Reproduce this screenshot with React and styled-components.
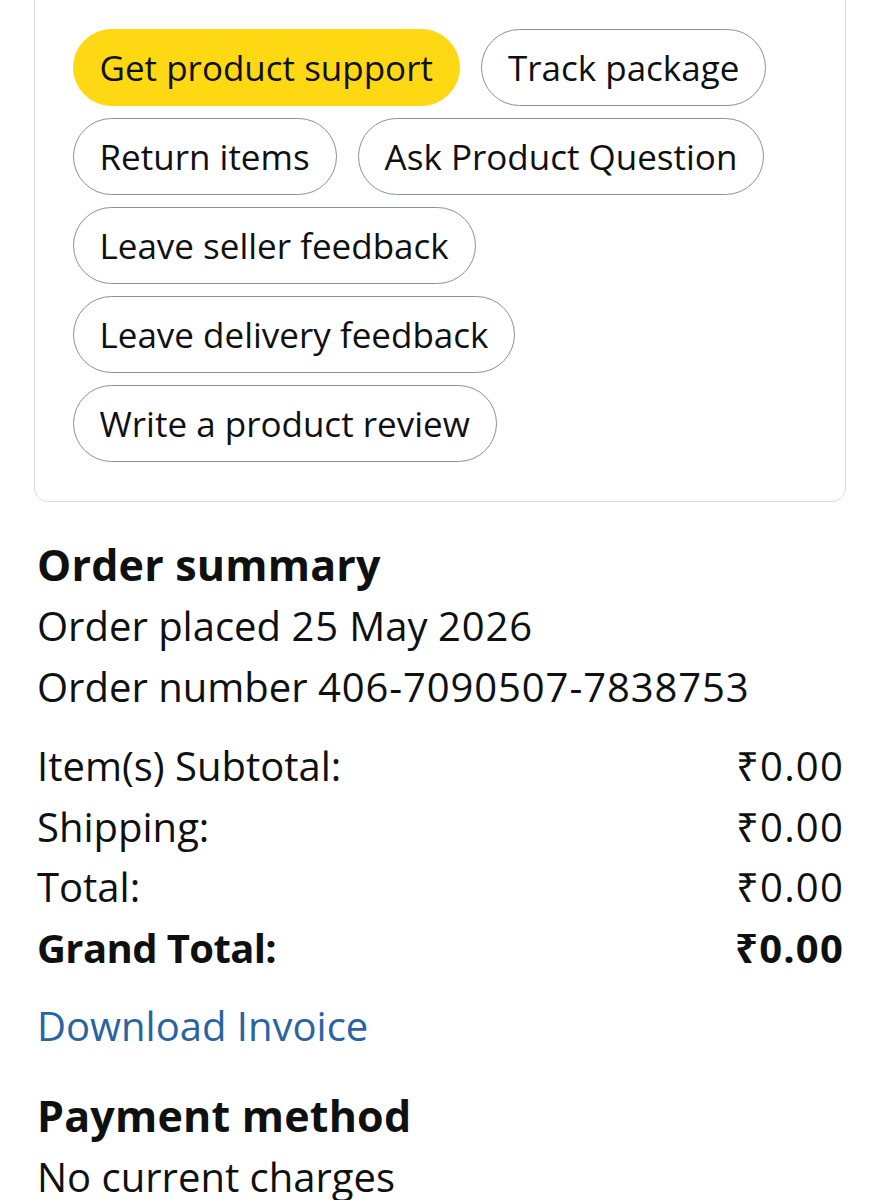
import React from "react";
import styled, { createGlobalStyle } from "styled-components";

const Global = createGlobalStyle`
  html, body { margin: 0; padding: 0; background: #ffffff; }
  body {
    font-family: "Open Sans", "Noto Sans", "DejaVu Sans", sans-serif;
    color: #0f1111;
    overflow: hidden;
  }
`;

const Page = styled.div`
  width: 880px;
  display: flex;
  flex-direction: column;
`;

const Card = styled.section`
  margin: -40px 34px 0 34px;
  padding: 67.5px 37.5px 39.5px 37.5px;
  border: 1.5px solid #d9dcdc;
  border-radius: 14px;
  display: flex;
  flex-direction: column;
  gap: 12px;
`;

const PillRow = styled.div`
  display: flex;
  gap: 21px;
`;

const Pill = styled.button`
  height: 77px;
  padding: 0 26px;
  border-radius: 40px;
  border: 1.5px solid ${(p) => (p.$primary ? "#ffd814" : "#8d9096")};
  background: ${(p) => (p.$primary ? "#ffd814" : "#ffffff")};
  color: #0f1111;
  font-family: inherit;
  font-size: 35px;
  font-weight: 400;
  display: inline-flex;
  align-items: center;
  white-space: nowrap;
  cursor: pointer;
`;

const Content = styled.div`
  padding: 32px 37px 0 37px;
  display: flex;
  flex-direction: column;
`;

const Heading = styled.h2`
  margin: 0;
  font-size: 43px;
  letter-spacing: 0.2px;
  font-weight: 700;
  line-height: 61px;
`;

const Line = styled.div`
  font-size: 40px;
  line-height: 61px;
`;

const Num = styled.span`
  letter-spacing: 0.9px;
`;

const Totals = styled.div`
  margin-top: 19px;
  display: flex;
  flex-direction: column;
`;

const Row = styled.div`
  display: flex;
  justify-content: space-between;
  font-size: 40px;
  line-height: 60.7px;
  font-weight: ${(p) => (p.$bold ? 700 : 400)};
`;

const Label = styled.span`
  letter-spacing: ${(p) => (p.$bold ? "-0.6px" : "0")};
`;

const Amount = styled.span`
  letter-spacing: 1.2px;
  margin-right: -1px;
`;

const Link = styled.a`
  margin-top: 17px;
  font-size: 40px;
  line-height: 60px;
  color: #2a64a0;
  text-decoration: none;
  align-self: flex-start;
`;

const Section = styled.div`
  margin-top: 29px;
  display: flex;
  flex-direction: column;
`;

const rows = [
  [{ label: "Get product support", primary: true }, { label: "Track package" }],
  [{ label: "Return items" }, { label: "Ask Product Question" }],
  [{ label: "Leave seller feedback" }],
  [{ label: "Leave delivery feedback" }],
  [{ label: "Write a product review" }],
];

const totals = [
  ["Item(s) Subtotal:", "₹0.00"],
  ["Shipping:", "₹0.00"],
  ["Total:", "₹0.00"],
  ["Grand Total:", "₹0.00", true],
];

export default function App() {
  return (
    <Page>
      <Global />
      <Card>
        {rows.map((r, i) => (
          <PillRow key={i}>
            {r.map((b) => (
              <Pill key={b.label} $primary={b.primary}>
                {b.label}
              </Pill>
            ))}
          </PillRow>
        ))}
      </Card>
      <Content>
        <Heading>Order summary</Heading>
        <Line>
          Order placed <Num>25</Num> May <Num>2026</Num>
        </Line>
        <Line>
          Order number <Num>406-7090507-7838753</Num>
        </Line>
        <Totals>
          {totals.map(([l, v, b]) => (
            <Row key={l} $bold={b}>
              <Label $bold={b}>{l}</Label>
              <Amount>{v}</Amount>
            </Row>
          ))}
        </Totals>
        <Link href="#">Download Invoice</Link>
        <Section>
          <Heading>Payment method</Heading>
          <Line>No current charges</Line>
        </Section>
      </Content>
    </Page>
  );
}
